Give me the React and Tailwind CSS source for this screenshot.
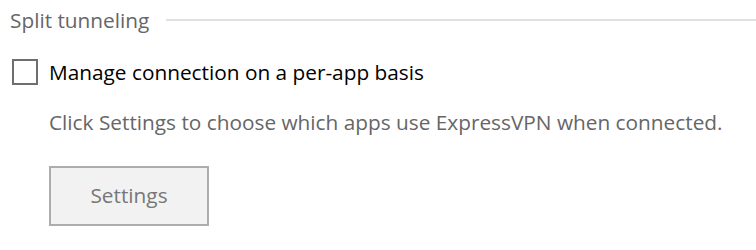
import React from "react";

const font = { fontFamily: '"Segoe UI", "Open Sans", "Noto Sans", sans-serif' };

const App = () => {
  return (
    <div className="w-[756px] h-[250px] bg-white overflow-hidden" style={font}>
      {/* Section header */}
      <div className="flex items-center pl-[10px] pt-[6px]">
        <span className="text-[20.8px] leading-[28px] text-[#666666]">Split tunneling</span>
        <div className="flex-1 h-[2px] bg-[#e0e0e0] ml-[17px]"></div>
      </div>

      {/* Checkbox row */}
      <div className="flex items-center pl-[12px] mt-[25px]">
        <div className="w-[26px] h-[26px] shrink-0 border-2 border-[#6e6e6e] bg-white"></div>
        <span className="ml-[11px] text-[20.8px] leading-[26px] text-black">
          Manage connection on a per-app basis
        </span>
      </div>

      <p className="pl-[49px] mt-[24px] text-[20.8px] leading-[26px] text-[#666666] whitespace-nowrap">
        Click Settings to choose which apps use ExpressVPN when connected.
      </p>

      <div className="pl-[49px] mt-[31px]">
        <button className="w-[160px] h-[60px] border-2 border-[#adadad] bg-[#f2f2f2] text-[20.8px] text-[#777777]">
          Settings
        </button>
      </div>
    </div>
  );
};

export default App;
